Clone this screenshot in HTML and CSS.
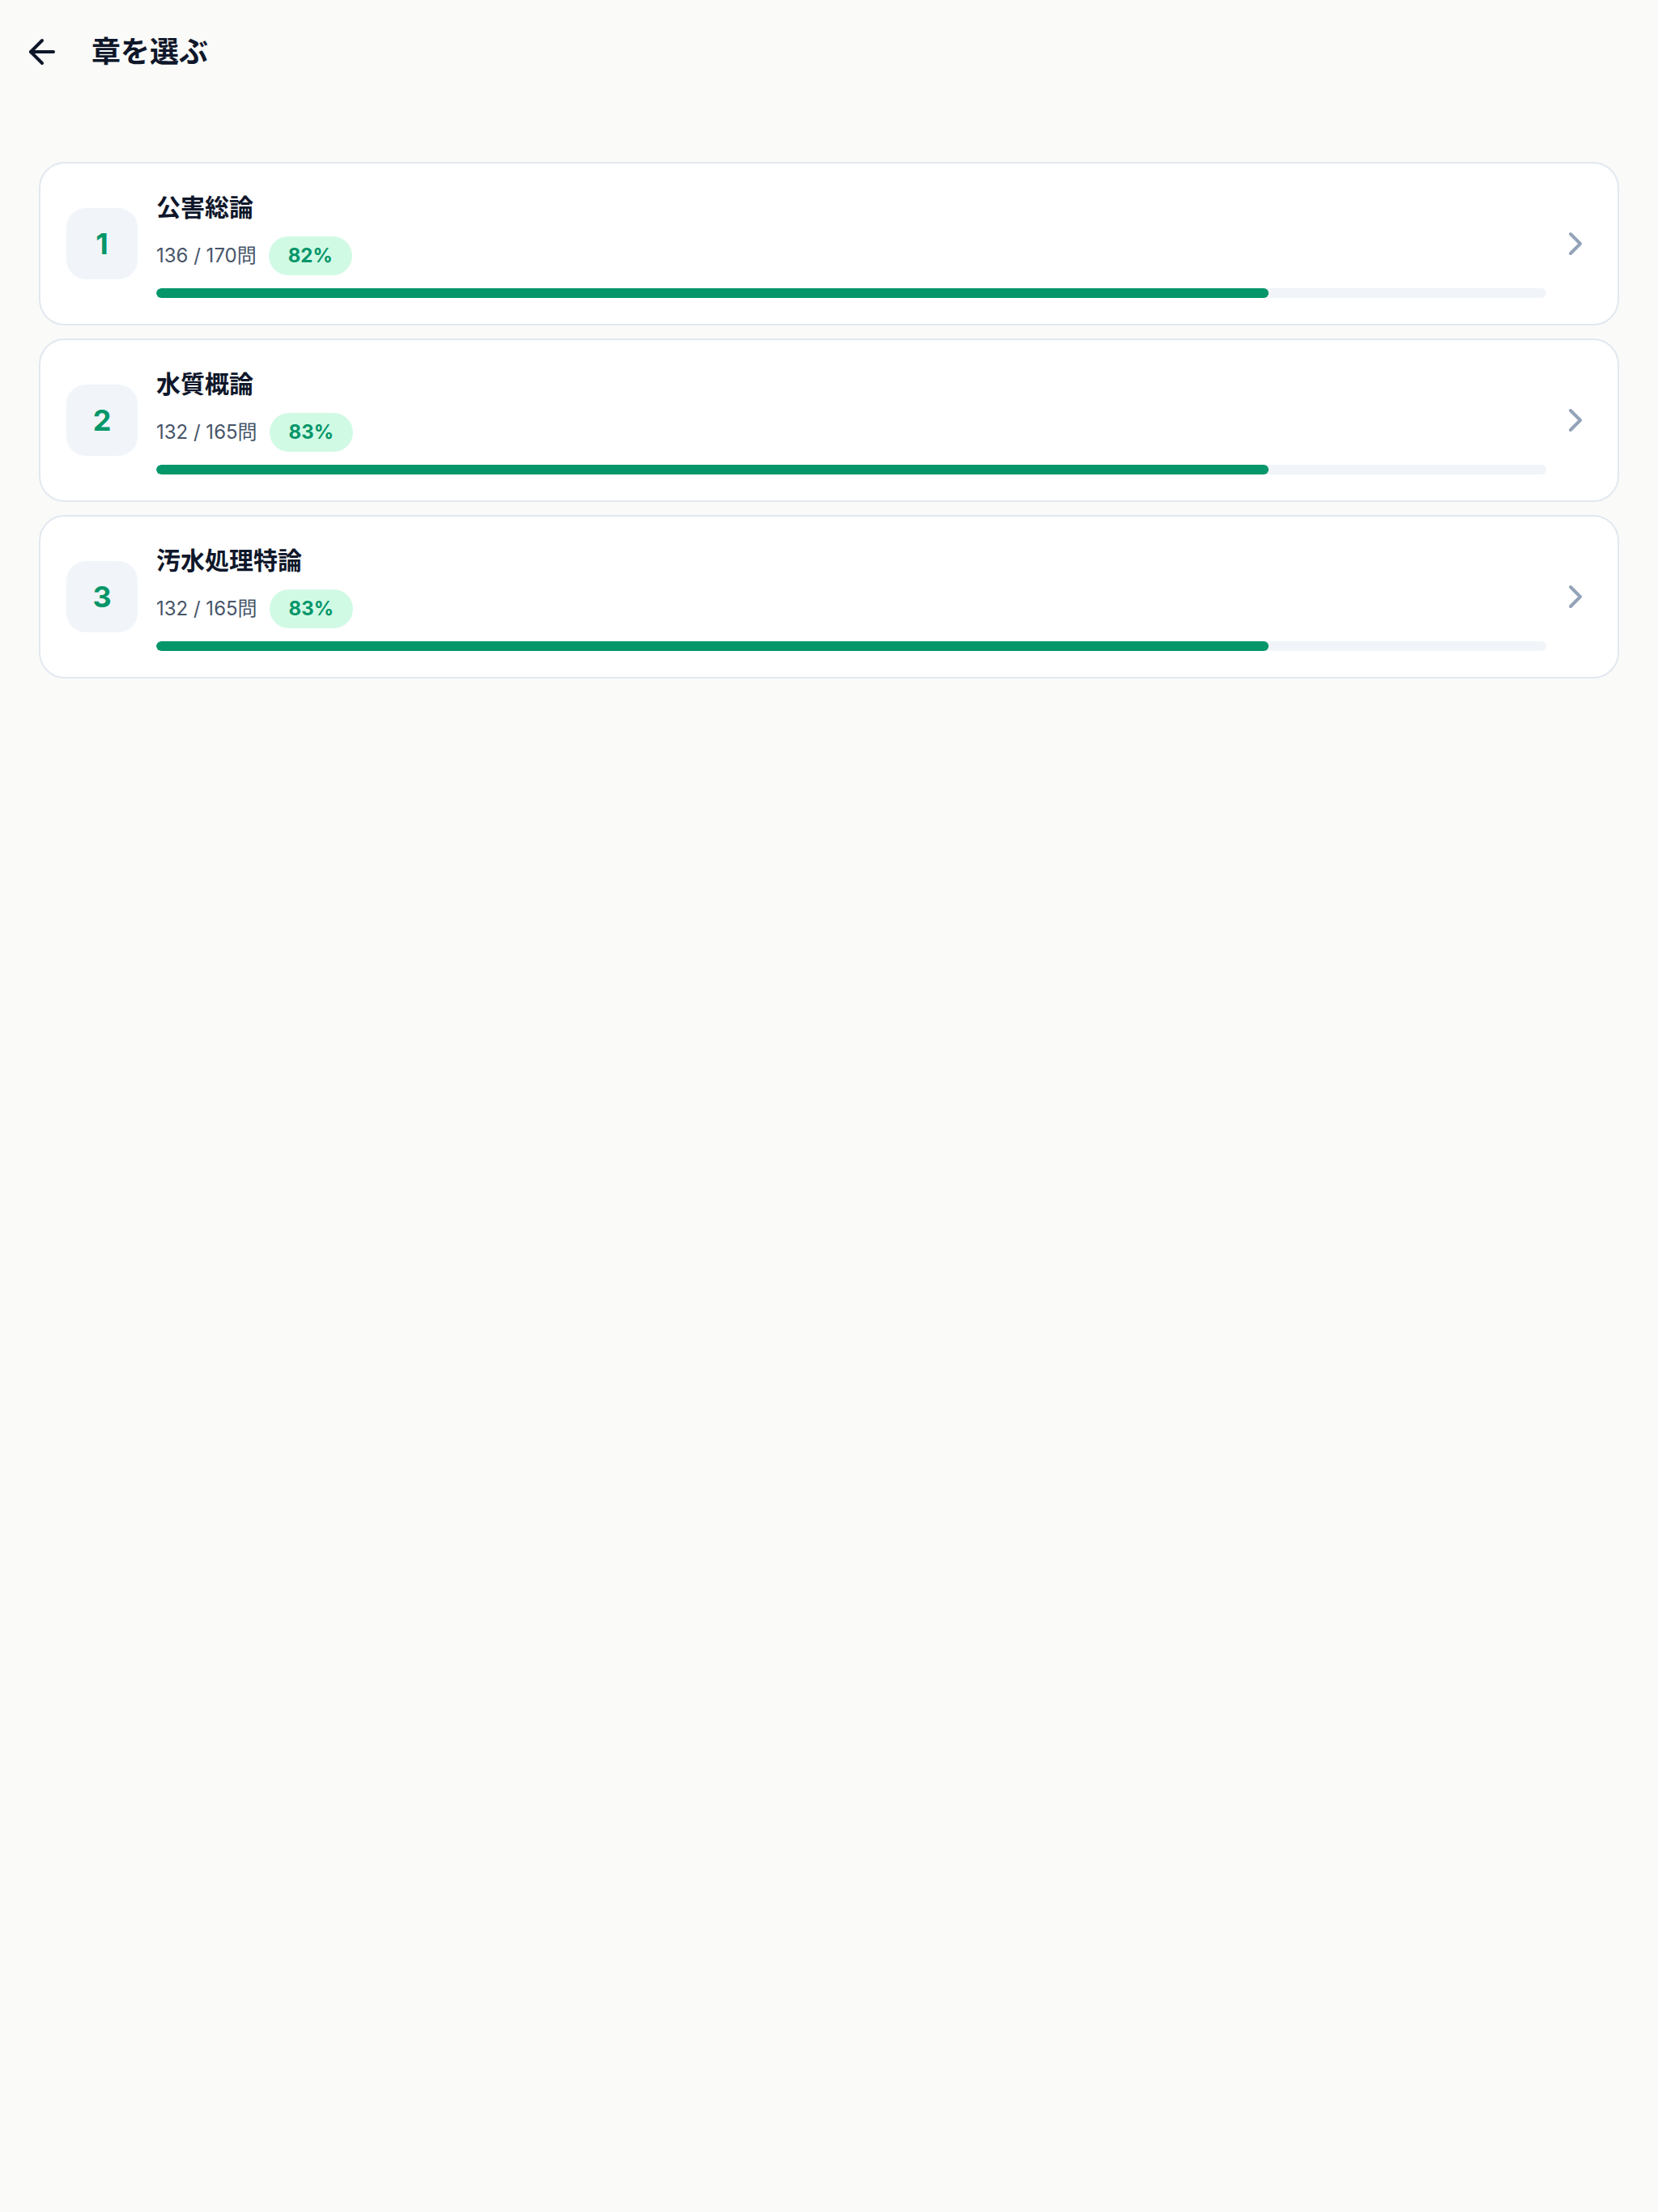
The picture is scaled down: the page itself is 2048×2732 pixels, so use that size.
FILE: index.html
```html
<!DOCTYPE html>
<html lang="ja">
<head>
<meta charset="utf-8">
<title>章を選ぶ</title>
<link rel="stylesheet" href="styles.css">
</head>
<body>
<header class="topbar">
  <button class="back" aria-label="戻る">
    <svg viewBox="0 0 24 24" width="48" height="48" fill="none" stroke="currentColor" stroke-width="2" stroke-linecap="round" stroke-linejoin="round"><path d="m12 19-7-7 7-7"/><path d="M19 12H5"/></svg>
  </button>
  <h1 class="title">章を選ぶ</h1>
</header>
<main class="list">
  <a class="card" href="#">
    <div class="num">1</div>
    <div class="body">
      <div class="name">公害総論</div>
      <div class="stats"><span class="count">136 / 170問</span><span class="badge">82%</span></div>
      <div class="track"><div class="fill" style="width:80%"></div></div>
    </div>
    <svg class="chev" viewBox="0 0 24 24" width="48" height="48" fill="none" stroke="currentColor" stroke-width="2" stroke-linecap="round" stroke-linejoin="round"><path d="m9 18 6-6-6-6"/></svg>
  </a>
  <a class="card" href="#">
    <div class="num">2</div>
    <div class="body">
      <div class="name">水質概論</div>
      <div class="stats"><span class="count">132 / 165問</span><span class="badge">83%</span></div>
      <div class="track"><div class="fill" style="width:80%"></div></div>
    </div>
    <svg class="chev" viewBox="0 0 24 24" width="48" height="48" fill="none" stroke="currentColor" stroke-width="2" stroke-linecap="round" stroke-linejoin="round"><path d="m9 18 6-6-6-6"/></svg>
  </a>
  <a class="card" href="#">
    <div class="num">3</div>
    <div class="body">
      <div class="name">汚水処理特論</div>
      <div class="stats"><span class="count">132 / 165問</span><span class="badge">83%</span></div>
      <div class="track"><div class="fill" style="width:80%"></div></div>
    </div>
    <svg class="chev" viewBox="0 0 24 24" width="48" height="48" fill="none" stroke="currentColor" stroke-width="2" stroke-linecap="round" stroke-linejoin="round"><path d="m9 18 6-6-6-6"/></svg>
  </a>
</main>
</body>
</html>
```
FILE: styles.css
```css
* { box-sizing: border-box; }
html, body { margin: 0; padding: 0; }
body {
  background: #fafaf9;
  font-family: Inter, "Noto Sans CJK JP", sans-serif;
  color: #0f172a;
  min-height: 2732px;
}
.topbar {
  height: 128px;
  display: flex;
  align-items: center;
  padding: 0 20px;
  gap: 29px;
}
.back {
  border: 0;
  background: transparent;
  padding: 8px;
  color: #0f172a;
  display: flex;
  cursor: pointer;
}
.title {
  margin: 0;
  font-size: 36px;
  font-weight: 700;
  line-height: 48px;
}
.list {
  padding: 72px 48px 0;
  display: flex;
  flex-direction: column;
  gap: 16px;
}
.card {
  display: flex;
  align-items: center;
  background: #ffffff;
  border: 2px solid #e2e8f0;
  border-radius: 32px;
  padding: 32px 28px 32px 32px;
  text-decoration: none;
  color: inherit;
}
.num {
  width: 88px;
  height: 88px;
  flex: none;
  border-radius: 24px;
  background: #f1f5f9;
  color: #059669;
  font-size: 36px;
  font-weight: 700;
  display: flex;
  align-items: center;
  justify-content: center;
}
.body {
  flex: 1;
  margin-left: 23px;
  margin-right: 12px;
  display: flex;
  flex-direction: column;
}
.name {
  font-size: 30px;
  font-weight: 700;
  line-height: 44px;
  color: #0f172a;
}
.stats {
  margin-top: 14px;
  display: flex;
  align-items: center;
  gap: 15px;
  height: 48px;
}
.count {
  font-size: 24px;
  color: #475569;
  line-height: 32px;
}
.badge {
  background: #d1fae5;
  color: #059669;
  font-size: 24px;
  font-weight: 700;
  line-height: 32px;
  padding: 8px 24px;
  border-radius: 999px;
}
.track {
  margin-top: 16px;
  height: 12px;
  border-radius: 6px;
  background: #f1f5f9;
  overflow: hidden;
}
.fill {
  height: 100%;
  border-radius: 6px;
  background: #059669;
}
.chev {
  flex: none;
  color: #94a3b8;
}
```
